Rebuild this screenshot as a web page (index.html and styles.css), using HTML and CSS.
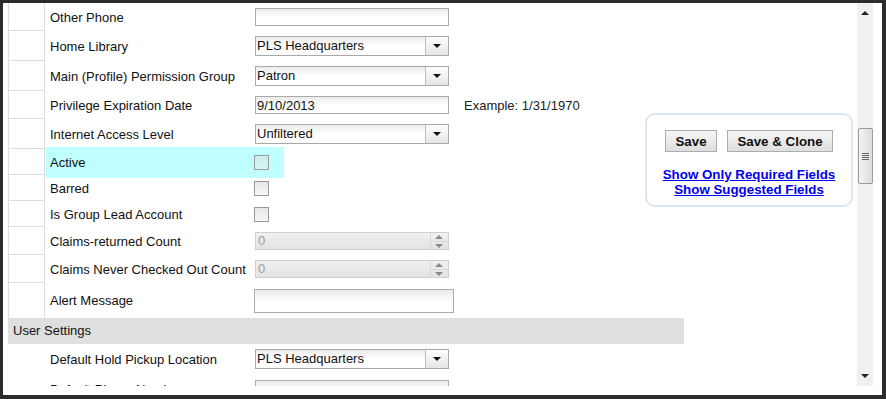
FILE: index.html
```html
<!DOCTYPE html>
<html lang="en">

<head>
    <meta charset="UTF-8">
    <meta name="viewport" content="width=device-width, initial-scale=1.0">
    <title>Edit Patron</title>
    <link rel="stylesheet" href="styles.css">
</head>

<body>
    <div class="frame">
        <div class="view">
            <div class="form">
                <div class="row h28">
                    <div class="gut"></div>
                    <div class="lab">Other Phone</div>
                    <div class="fld"><input class="text" type="text"></div>
                </div>
                <div class="row h30">
                    <div class="gut"></div>
                    <div class="lab">Home Library</div>
                    <div class="fld">
                        <div class="select"><span class="val">PLS Headquarters</span><span class="drop"></span></div>
                    </div>
                </div>
                <div class="row h30">
                    <div class="gut"></div>
                    <div class="lab">Main (Profile) Permission Group</div>
                    <div class="fld">
                        <div class="select"><span class="val">Patron</span><span class="drop"></span></div>
                    </div>
                </div>
                <div class="row h28">
                    <div class="gut"></div>
                    <div class="lab">Privilege Expiration Date</div>
                    <div class="fld">
                        <input class="text" type="text" value="9/10/2013">
                        <span class="hint">Example: 1/31/1970</span>
                    </div>
                </div>
                <div class="row h30">
                    <div class="gut"></div>
                    <div class="lab">Internet Access Level</div>
                    <div class="fld">
                        <div class="select"><span class="val">Unfiltered</span><span class="drop"></span></div>
                    </div>
                </div>
                <div class="row h26 active">
                    <div class="gut"></div>
                    <div class="lab">Active</div>
                    <div class="fld">
                        <div class="hl"><span class="check"></span></div>
                    </div>
                </div>
                <div class="row h26">
                    <div class="gut"></div>
                    <div class="lab">Barred</div>
                    <div class="fld"><span class="check"></span></div>
                </div>
                <div class="row h26">
                    <div class="gut"></div>
                    <div class="lab">Is Group Lead Account</div>
                    <div class="fld"><span class="check"></span></div>
                </div>
                <div class="row h28">
                    <div class="gut"></div>
                    <div class="lab">Claims-returned Count</div>
                    <div class="fld">
                        <div class="num"><span class="val">0</span><span class="spin"><i class="up"></i><i class="down"></i></span></div>
                    </div>
                </div>
                <div class="row h28">
                    <div class="gut"></div>
                    <div class="lab">Claims Never Checked Out Count</div>
                    <div class="fld">
                        <div class="num"><span class="val">0</span><span class="spin"><i class="up"></i><i class="down"></i></span></div>
                    </div>
                </div>
                <div class="row h35">
                    <div class="gut last"></div>
                    <div class="lab">Alert Message</div>
                    <div class="fld"><input class="text wide" type="text"></div>
                </div>

                <div class="band">User Settings</div>

                <div class="row h30">
                    <div class="gut plain"></div>
                    <div class="lab">Default Hold Pickup Location</div>
                    <div class="fld">
                        <div class="select"><span class="val">PLS Headquarters</span><span class="drop"></span></div>
                    </div>
                </div>
                <div class="row h30">
                    <div class="gut plain"></div>
                    <div class="lab">Default Phone Number</div>
                    <div class="fld"><input class="text" type="text"></div>
                </div>
            </div>

            <!-- floating save panel -->
            <div class="panel">
                <div class="buttons">
                    <button class="btn save">Save</button>
                    <button class="btn clone">Save &amp; Clone</button>
                </div>
                <div class="links">
                    <a href="#">Show Only Required Fields</a><br>
                    <a href="#">Show Suggested Fields</a>
                </div>
            </div>
        </div>

        <div class="sbar">
            <div class="arrow"><i class="tri-up"></i></div>
            <div class="track"><div class="thumb"><i></i><i></i><i></i><i></i></div></div>
            <div class="arrow"><i class="tri-down"></i></div>
        </div>
    </div>
</body>

</html>
```

FILE: styles.css
```css
body {
    margin: 0;
    background-color: #2b2b2b;
    font-family: "Liberation Sans", Arial, sans-serif;
    font-size: 13px;
    color: #111;
}

.frame {
    display: flex;
    height: 392px;
    margin: 3px 4px 0 3px;
    padding-right: 9px;
    background: #fff;
}

.view {
    position: relative;
    width: 854px;
    height: 383px;
    overflow: hidden;
}

.form {
    width: 676px;
    margin-left: 5px;
}

.row {
    display: grid;
    grid-template-columns: 37px 205px 1fr;
}

.h26 { height: 26px; }
.h28 { height: 28px; }
.h30 { height: 30px; }
.h35 { height: 35px; }

.gut {
    border: 1px solid #dddddd;
    border-top: 0;
}

.gut.last {
    border-bottom: 0;
}

.gut.plain {
    border: 0;
}

.lab {
    display: flex;
    align-items: center;
    padding-left: 5px;
    white-space: nowrap;
}

.fld {
    display: flex;
    align-items: center;
}

/* highlighted row */
.active .lab {
    margin: -2px 0 -3px 1px;
    padding-left: 4px;
    background: #bfffff;
}

.active .fld .hl {
    display: flex;
    align-items: center;
    align-self: stretch;
    width: 30px;
    margin: -2px 0 -3px;
    padding-left: 4px;
    background: #bfffff;
}

.active .check {
    background: linear-gradient(#c8eeee, #d8f4f4);
}

.text {
    box-sizing: border-box;
    width: 194px;
    height: 18px;
    margin: 0 0 0 5px;
    padding: 0 1px;
    border: 1px solid #ababab;
    background: linear-gradient(#ebebeb, #fff 55%);
    font: 13px "Liberation Sans", Arial, sans-serif;
    color: #111;
    outline: none;
}

.text.wide {
    width: 200px;
    height: 24px;
    margin-left: 4px;
}

.hint {
    margin-left: 15px;
    color: #222;
}

.select {
    display: flex;
    box-sizing: border-box;
    width: 194px;
    height: 20px;
    margin-left: 5px;
    border: 1px solid #a9a9a9;
    background: linear-gradient(#ececec, #fff 50%);
}

.select .val {
    flex: 1;
    padding-left: 1px;
    line-height: 18px;
}

.select .drop {
    position: relative;
    width: 22px;
    border-left: 1px solid #bdbdbd;
    background: linear-gradient(#fdfdfd, #e6e6e6);
}

.select .drop::after {
    content: "";
    position: absolute;
    left: 7px;
    top: 7px;
    border-left: 4px solid transparent;
    border-right: 4px solid transparent;
    border-top: 4px solid #111;
}

.check {
    display: block;
    box-sizing: border-box;
    width: 15px;
    height: 15px;
    margin-left: 4px;
    border: 1px solid #9a9a9a;
    background: linear-gradient(#e6e6e6, #f7f7f7);
}

.active .fld .check {
    margin-left: 0;
}

.num {
    display: flex;
    box-sizing: border-box;
    width: 194px;
    height: 18px;
    margin-left: 5px;
    border: 1px solid #cfcfcf;
    background: linear-gradient(#f0f0f0, #e3e3e3);
    color: #9c9c9c;
}

.num .val {
    flex: 1;
    padding-left: 2px;
    line-height: 16px;
}

.num .spin {
    display: flex;
    flex-direction: column;
    width: 17px;
    border-left: 1px solid #d6d6d6;
}

.num .spin i {
    position: relative;
    flex: 1;
}

.num .spin .up {
    border-bottom: 1px solid #d6d6d6;
}

.num .spin i::after {
    content: "";
    position: absolute;
    left: 4px;
    top: 2px;
    border-left: 4px solid transparent;
    border-right: 4px solid transparent;
}

.num .spin .up::after {
    border-bottom: 4px solid #8a8a8a;
}

.num .spin .down::after {
    top: 2px;
    border-top: 4px solid #8a8a8a;
}

.band {
    height: 26px;
    padding-left: 5px;
    background: #dfdfdf;
    line-height: 26px;
}

/* save panel */
.panel {
    position: absolute;
    left: 642px;
    top: 110px;
    box-sizing: border-box;
    width: 208px;
    height: 94px;
    padding-top: 15px;
    border: 2px solid #dbe6f6;
    border-radius: 10px;
    text-align: center;
}

.buttons {
    display: flex;
    justify-content: center;
    gap: 10px;
}

.btn {
    height: 22px;
    padding: 0;
    border: 1px solid #adadad;
    background: linear-gradient(#f6f6f6, #dedede);
    font: bold 13.33px "Liberation Sans", Arial, sans-serif;
    color: #111;
}

.btn.save {
    width: 52px;
}

.btn.clone {
    width: 106px;
}

.links {
    margin-top: 15px;
    line-height: 15px;
    font-weight: bold;
    font-size: 13.33px;
}

a {
    color: #0000ee;
}

/* scrollbar */
.sbar {
    display: flex;
    flex-direction: column;
    width: 16px;
    height: 383px;
    background: #f0f0f0;
}

.arrow {
    position: relative;
    height: 17px;
}

.arrow i {
    position: absolute;
    left: 4px;
    border-left: 4px solid transparent;
    border-right: 4px solid transparent;
}

.tri-up {
    top: 8px;
    border-bottom: 4px solid #222;
}

.tri-down {
    top: 5px;
    border-top: 4px solid #222;
}

.track {
    flex: 1;
    padding-top: 108px;
}

.thumb {
    display: flex;
    flex-direction: column;
    align-items: center;
    justify-content: center;
    gap: 1px;
    box-sizing: border-box;
    width: 15px;
    height: 56px;
    margin-left: 1px;
    border: 1px solid #9a9a9a;
    border-radius: 2px;
    background: linear-gradient(to right, #f4f4f4, #dcdcdc);
}

.thumb i {
    display: block;
    width: 7px;
    height: 1px;
    background: #666;
}
```
